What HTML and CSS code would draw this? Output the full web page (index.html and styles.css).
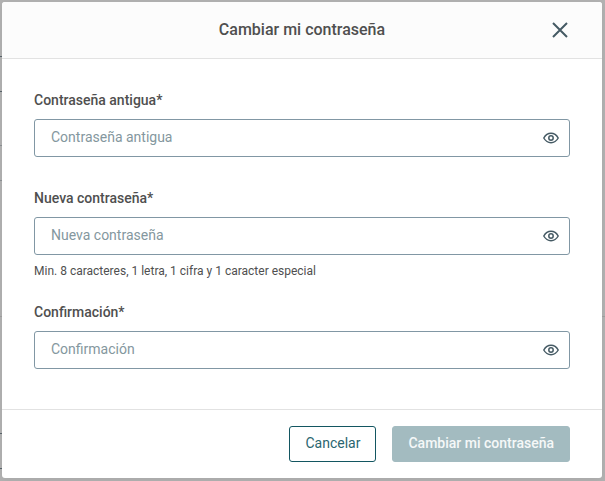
FILE: index.html
```html
<!DOCTYPE html>
<html lang="es">
<head>
<meta charset="utf-8">
<meta name="viewport" content="width=device-width, initial-scale=1">
<title>Cambiar mi contraseña</title>
<link rel="stylesheet" href="styles.css">
</head>
<body>
<form class="modal">
    <header class="modal-header">
        <h1 class="title">Cambiar mi contraseña</h1>
        <button class="close" type="button" aria-label="Cerrar">
            <svg width="16" height="16" viewBox="0 0 16 16"><path d="M1 1l14 14M15 1L1 15"/></svg>
        </button>
    </header>

    <div class="modal-body">
        <div class="field">
            <label for="old">Contraseña antigua*</label>
            <div class="box">
                <input id="old" type="password" placeholder="Contraseña antigua">
                <button class="eye" type="button" aria-label="Mostrar">
                    <svg width="16" height="12" viewBox="0 0 16 12"><path d="M.8 6C2.6 2.8 5 1.3 8 1.3S13.4 2.8 15.2 6C13.4 9.2 11 10.7 8 10.7S2.6 9.2.8 6z"/><circle cx="8" cy="6" r="2.2"/></svg>
                </button>
            </div>
        </div>

        <div class="field field-hint">
            <label for="new">Nueva contraseña*</label>
            <div class="box">
                <input id="new" type="password" placeholder="Nueva contraseña" aria-describedby="hint">
                <button class="eye" type="button" aria-label="Mostrar">
                    <svg width="16" height="12" viewBox="0 0 16 12"><path d="M.8 6C2.6 2.8 5 1.3 8 1.3S13.4 2.8 15.2 6C13.4 9.2 11 10.7 8 10.7S2.6 9.2.8 6z"/><circle cx="8" cy="6" r="2.2"/></svg>
                </button>
            </div>
            <p class="hint" id="hint">Min. 8 caracteres, 1 letra, 1 cifra y 1 caracter especial</p>
        </div>

        <div class="field">
            <label for="confirm">Confirmación*</label>
            <div class="box">
                <input id="confirm" type="password" placeholder="Confirmación">
                <button class="eye" type="button" aria-label="Mostrar">
                    <svg width="16" height="12" viewBox="0 0 16 12"><path d="M.8 6C2.6 2.8 5 1.3 8 1.3S13.4 2.8 15.2 6C13.4 9.2 11 10.7 8 10.7S2.6 9.2.8 6z"/><circle cx="8" cy="6" r="2.2"/></svg>
                </button>
            </div>
        </div>
    </div>

    <footer class="modal-footer">
        <button class="btn" type="button">Cancelar</button>
        <button class="btn btn-main" type="submit" disabled>Cambiar mi contraseña</button>
    </footer>
</form>
</body>
</html>
```

FILE: styles.css
```css
* {
    box-sizing: border-box;
}
/* the page behind the dialog: only the borders of its fields show */
body {
    margin: 0;
    padding: 2px 3px 3px 2px;
    background-color: #b2b2b2;
    background-image:
        linear-gradient(#59646b, #59646b),
        linear-gradient(#59646b, #59646b),
        linear-gradient(#8d9194, #8d9194),
        linear-gradient(#8d9194, #8d9194),
        linear-gradient(#a0a0a0, #a0a0a0),
        linear-gradient(#59646b, #59646b),
        linear-gradient(#59646b, #59646b);
    background-size: 50% 1px, 50% 1px, 50% 1px, 50% 1px, 100% 1px, 50% 1px, 50% 1px;
    background-position: 0 56px, 0 91px, 0 145px, 0 180px, 0 316px, 0 433px, 0 468px;
    background-repeat: no-repeat;
    font-family: Roboto, "Liberation Sans", sans-serif;
    font-size: 14px;
    line-height: 20px;
    color: #4f4f4f;
}
.modal {
    background-color: white;
    border-radius: 3px;
    overflow: hidden;
    box-shadow: 0 2px 8px rgba(0, 0, 0, 0.06);
}
.modal-header {
    display: grid;
    grid-template-columns: 20px 1fr 20px;
    align-items: center;
    padding: 16px 32px;
    background-color: #fcfcfc;
    border-bottom: 1px solid #e2e2e2;
}
.title {
    grid-column: 2;
    margin: 0;
    font-size: 16px;
    font-weight: 500;
    line-height: 24px;
    text-align: center;
}
.close, .eye {
    display: flex;
    align-items: center;
    justify-content: center;
    padding: 0;
    border: none;
    background: none;
    cursor: pointer;
}
.close svg, .eye svg {
    fill: none;
    stroke: #455a64;
}
.close svg {
    stroke-width: 2;
}
.eye svg {
    stroke-width: 1.5;
}

.modal-body {
    padding: 32px 32px 40px;
}
.field {
    margin-bottom: 32px;
}
.field-hint {
    margin-bottom: 24px;
}
.field:last-child {
    margin-bottom: 0;
}
label {
    display: block;
    margin-bottom: 10px;
    font-weight: 500;
    line-height: 18px;
}
.box {
    position: relative;
}
input {
    display: block;
    width: 100%;
    height: 38px;
    padding: 0 40px 2px 16px;
    border: 1px solid #8197a4;
    border-radius: 3px;
    font: inherit;
    color: #4f4f4f;
}
input::placeholder {
    color: #84979e;
    opacity: 1;
}
.eye {
    position: absolute;
    top: 0;
    right: 0;
    width: 38px;
    height: 38px;
}
.hint {
    margin: 8px 0 0;
    font-size: 12px;
    line-height: 16px;
}

.modal-footer {
    display: flex;
    justify-content: flex-end;
    gap: 16px;
    padding: 16px 32px;
    border-top: 1px solid #e2e2e2;
}
.btn {
    height: 36px;
    padding: 0 15px 2px;
    border: 1px solid #135661;
    border-radius: 3px;
    background-color: white;
    color: #2a6670;
    font: inherit;
    cursor: pointer;
}
.btn-main {
    border-color: #a3bbc0;
    background-color: #a3bbc0;
    color: #f5f8f8;
    font-weight: 500;
    cursor: default;
}
```
